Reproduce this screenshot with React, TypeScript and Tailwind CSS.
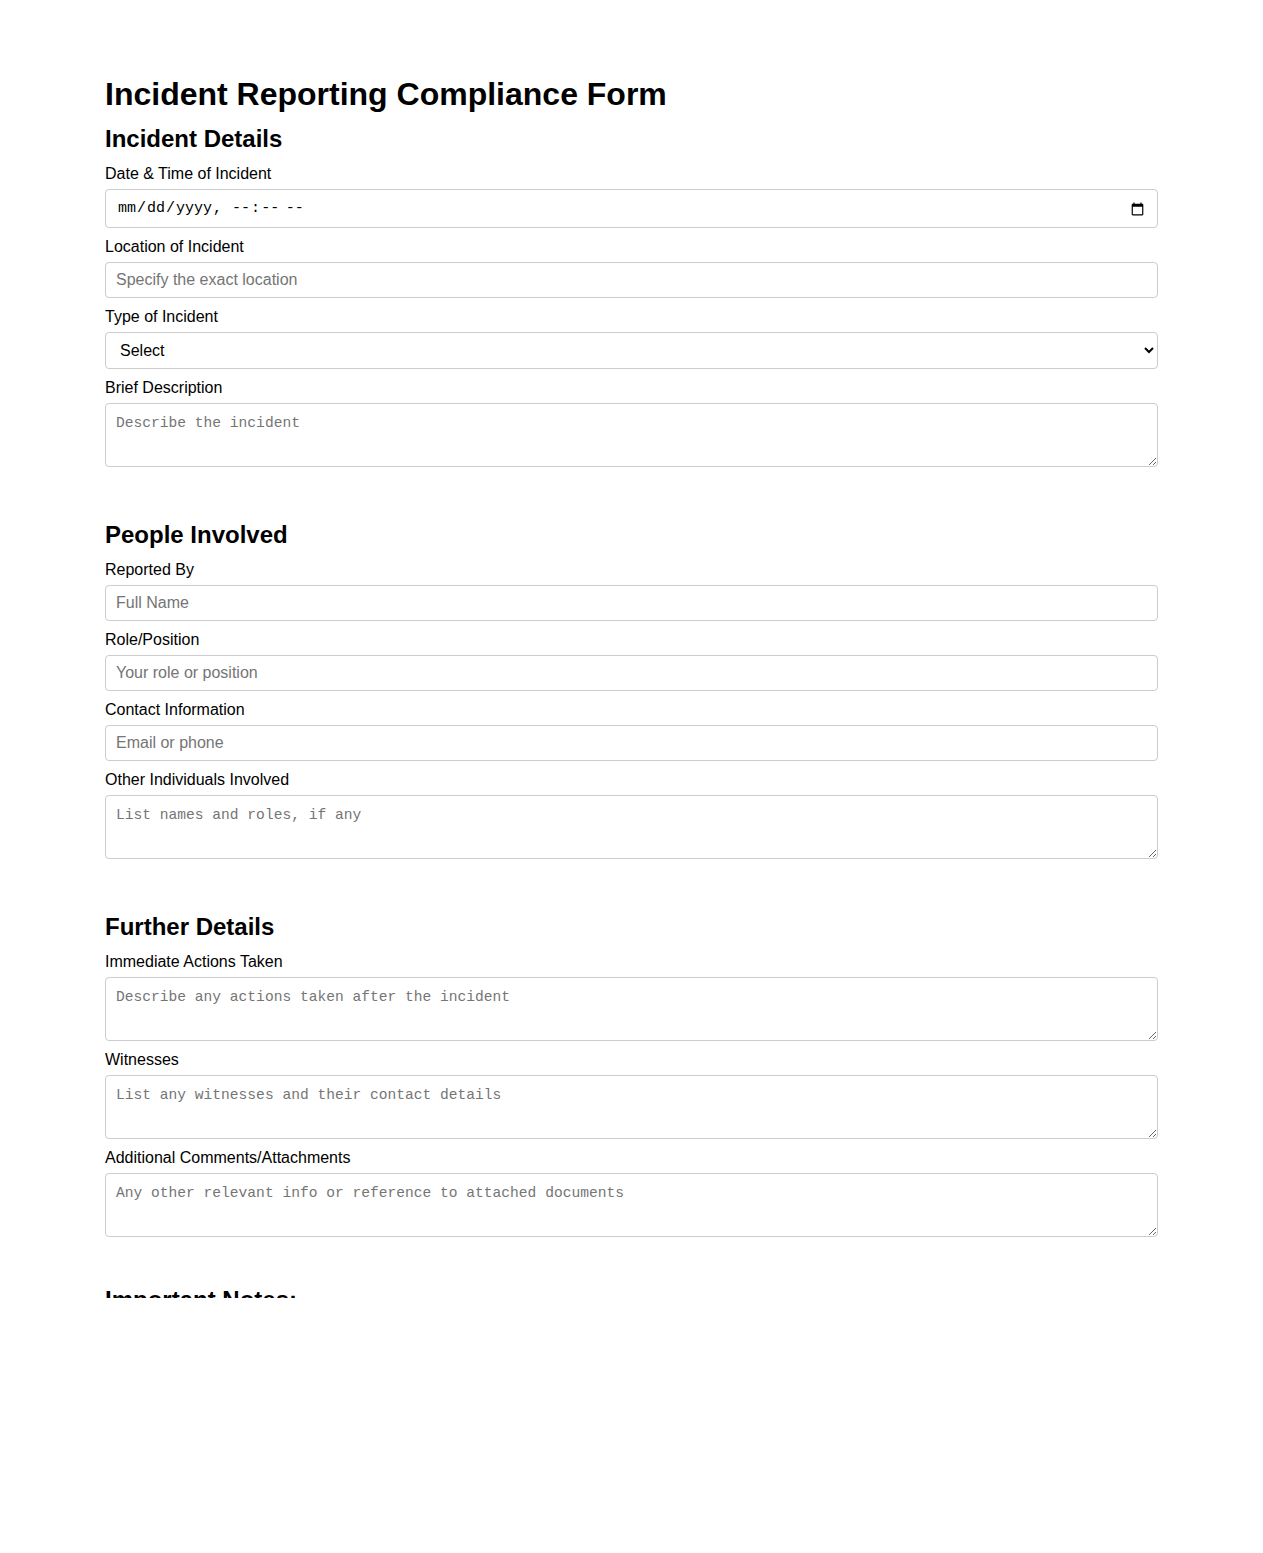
import React from 'react';

type Field = {
  label: string;
  kind: 'text' | 'textarea' | 'date' | 'select';
  placeholder?: string;
};

const sections: { title: string; fields: Field[] }[] = [
  {
    title: 'Incident Details',
    fields: [
      { label: 'Date & Time of Incident', kind: 'date' },
      { label: 'Location of Incident', kind: 'text', placeholder: 'Specify the exact location' },
      { label: 'Type of Incident', kind: 'select' },
      { label: 'Brief Description', kind: 'textarea', placeholder: 'Describe the incident' },
    ],
  },
  {
    title: 'People Involved',
    fields: [
      { label: 'Reported By', kind: 'text', placeholder: 'Full Name' },
      { label: 'Role/Position', kind: 'text', placeholder: 'Your role or position' },
      { label: 'Contact Information', kind: 'text', placeholder: 'Email or phone' },
      { label: 'Other Individuals Involved', kind: 'textarea', placeholder: 'List names and roles, if any' },
    ],
  },
  {
    title: 'Further Details',
    fields: [
      { label: 'Immediate Actions Taken', kind: 'textarea', placeholder: 'Describe any actions taken after the incident' },
      { label: 'Witnesses', kind: 'textarea', placeholder: 'List any witnesses and their contact details' },
      {
        label: 'Additional Comments/Attachments',
        kind: 'textarea',
        placeholder: 'Any other relevant info or reference to attached documents',
      },
    ],
  },
];

const box = 'block w-full border border-[#cccccc] rounded-[4px] bg-white text-black';

const FormField: React.FC<{ field: Field }> = ({ field }) => {
  let control: React.ReactNode;
  switch (field.kind) {
    case 'date':
      control = (
        <input
          type="datetime-local"
          className={`${box} h-[39px] pl-[11px] pr-[10px] pt-[2px] font-['Liberation_Mono',monospace] text-[15px]`}
        />
      );
      break;
    case 'select':
      control = (
        <select className={`${box} h-[37px] px-[10px] text-[16px]`} defaultValue="">
          <option value="">Select</option>
          <option>Injury</option>
          <option>Near Miss</option>
          <option>Property Damage</option>
          <option>Other</option>
        </select>
      );
      break;
    case 'textarea':
      control = (
        <textarea
          placeholder={field.placeholder}
          className={`${box} h-[64px] px-[10px] pt-[11px] pb-[9px] font-['Liberation_Mono',monospace] text-[14.6px] leading-[17px] placeholder:text-[#757575]`}
        />
      );
      break;
    default:
      control = (
        <input
          type="text"
          placeholder={field.placeholder}
          className={`${box} h-[36px] px-[10px] text-[16px] placeholder:text-[#757575]`}
        />
      );
  }

  return (
    <div className="mb-[9px]">
      <label className="block text-[16px] leading-[18px] pt-[1px] mb-[6px]">{field.label}</label>
      {control}
    </div>
  );
};

export default function App() {
  return (
    <div className="h-[1298px] overflow-hidden bg-white text-black font-['Liberation_Sans',Arial,sans-serif]">
      <div className="w-[1053px] mx-auto pt-[76px]">
        <h1 className="text-[32px] leading-[37px] font-bold mb-[12px]">Incident Reporting Compliance Form</h1>
        {sections.map((s, i) => (
          <section key={s.title} className={i === 0 ? '' : 'mt-[54px]'}>
            <h2 className="text-[24px] leading-[28px] font-bold mb-[11px]">{s.title}</h2>
            {s.fields.map((f) => (
              <FormField key={f.label} field={f} />
            ))}
          </section>
        ))}
        <section className="mt-[49px]">
          <h2 className="text-[24px] leading-[28px] font-bold">Important Notes:</h2>
        </section>
      </div>
    </div>
  );
}
